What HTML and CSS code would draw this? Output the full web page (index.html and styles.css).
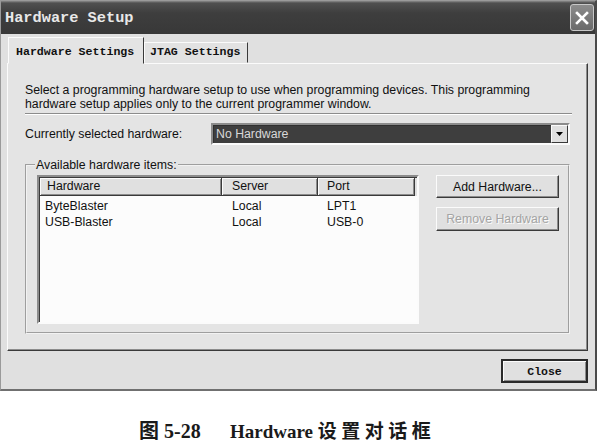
FILE: index.html
```html
<!DOCTYPE html>
<html>
<head>
<meta charset="utf-8">
<link rel="stylesheet" href="styles.css">
</head>
<body>
<div class="window">
  <div class="titlebar">
    <span class="title">Hardware Setup</span>
    <span class="xbtn"><svg width="14" height="14" viewBox="0 0 14 14"><path d="M2 2 L12 12 M12 2 L2 12" stroke="#fff" stroke-width="2.6" stroke-linecap="square"/></svg></span>
  </div>
  <div class="content">
    <div class="tabs">
      <div class="tab active">Hardware Settings</div>
      <div class="tab">JTAG Settings</div>
    </div>
    <div class="panel">
      <p class="desc">Select a programming hardware setup to use when programming devices. This programming<br>hardware setup applies only to the current programmer window.</p>
      <div class="sep"></div>
      <div class="selrow">
        <span class="sellabel">Currently selected hardware:</span>
        <div class="combo">
          <span class="combotext">No Hardware</span>
          <span class="arrow"><svg width="7" height="4" viewBox="0 0 7 4"><path d="M0 0 H7 L3.5 4 Z" fill="#000"/></svg></span>
        </div>
      </div>
      <fieldset class="group">
        <legend>Available hardware items:</legend>
        <div class="groupbody">
          <div class="list">
            <div class="lhead">
              <div class="hc c1">Hardware</div>
              <div class="hc c2">Server</div>
              <div class="hc c3">Port</div>
            </div>
            <div class="lrows">
              <div class="lrow"><span class="rc c1">ByteBlaster</span><span class="rc c2">Local</span><span class="rc c3">LPT1</span></div>
              <div class="lrow"><span class="rc c1">USB-Blaster</span><span class="rc c2">Local</span><span class="rc c3">USB-0</span></div>
            </div>
          </div>
          <div class="btns">
            <button class="btn">Add Hardware...</button>
            <button class="btn disabled">Remove Hardware</button>
          </div>
        </div>
      </fieldset>
    </div>
    <div class="footer">
      <button class="closebtn">Close</button>
    </div>
  </div>
</div>
<div class="caption"><span class="fig">图 5-28</span><span class="cap">Hardware <span class="cjk">设置对话框</span></span></div>
</body>
</html>
```
FILE: styles.css
```css
body {
  margin: 0;
  background: #fff;
  font-family: "Liberation Sans", Arial, sans-serif;
  width: 598px;
}
.window {
  width: 597px;
  height: 391px;
  box-sizing: border-box;
  background: #e0e0e0;
  border: 1px solid #9a9a9a;
  border-right: 2px solid #4a4a4a;
  border-bottom: 2px solid #707070;
  display: flex;
  flex-direction: column;
}
.titlebar {
  height: 33px;
  box-sizing: border-box;
  background: linear-gradient(#8a8a8a 0, #505050 2px, #3e3e3e 12px, #383838 100%);
  display: flex;
  align-items: center;
  justify-content: space-between;
  padding: 0 1px 0 4px;
}
.title {
  color: #e8e8e8;
  font-family: "Liberation Mono", "DejaVu Sans Mono", monospace;
  font-weight: bold;
  font-size: 15.3px;
}
.xbtn {
  width: 24px;
  height: 27px;
  box-sizing: border-box;
  border: 1px solid #c8c8c8;
  border-radius: 3px;
  background: linear-gradient(#8c8c8c, #6a6a6a);
  display: flex;
  align-items: center;
  justify-content: center;
}
.content {
  flex: 1;
  display: flex;
  flex-direction: column;
  padding: 3px 7px 0 6px;
}
.tabs {
  display: flex;
  align-items: flex-end;
  height: 26px;
  padding-left: 1px;
}
.tab {
  box-sizing: border-box;
  font-family: "Liberation Mono", "DejaVu Sans Mono", monospace;
  font-weight: bold;
  font-size: 11.6px;
  color: #111;
  border: 1px solid;
  border-color: #fbfbfb #3a3a3a transparent #fbfbfb;
  background: #e2e2e2;
  height: 21px;
  line-height: 18px;
  padding: 0 6px 0 5px;
  width: 104px;
}
.tab.active {
  width: 136px;
  height: 27px;
  line-height: 28px;
  padding-left: 7px;
  margin-bottom: -1px;
  position: relative;
  z-index: 1;
  background: #e4e4e4;
}
.panel {
  width: 581px;
  height: 288px;
  box-sizing: border-box;
  background: #e4e4e4;
  border: 1px solid;
  border-color: #fbfbfb #3a3a3a #3a3a3a #fbfbfb;
  box-shadow: inset -1px -1px 0 #8c8c8c;
  padding: 19px 15px 0 17px;
}
.desc {
  margin: 0;
  font-size: 12.3px;
  line-height: 14px;
  color: #111;
}
.sep {
  margin-top: 2px;
  border-top: 1px solid #8c8c8c;
  border-bottom: 1px solid #fff;
}
.selrow {
  margin-top: 8px;
  display: flex;
  align-items: center;
  height: 22px;
}
.sellabel {
  flex: 0 0 186px;
  font-size: 12.3px;
  color: #111;
}
.combo {
  width: 359px;
  height: 22px;
  box-sizing: border-box;
  border: 2px solid;
  border-color: #8c8c8c #fbfbfb #fbfbfb #8c8c8c;
  box-shadow: inset 1px 1px 0 #303030;
  background: #3e3e3e;
  display: flex;
  align-items: center;
  justify-content: space-between;
}
.combotext {
  color: #d8d8d8;
  font-size: 12.3px;
  padding-left: 3px;
}
.arrow {
  width: 17px;
  height: 18px;
  box-sizing: border-box;
  background: #e0e0e0;
  border: 1px solid;
  border-color: #fbfbfb #3a3a3a #3a3a3a #fbfbfb;
  display: flex;
  align-items: center;
  justify-content: center;
}
.group {
  margin: 13px 2px 0 0;
  padding: 3px 9px 8px 10px;
  border: 2px groove #f2f2f2;
  min-width: 0;
  box-sizing: border-box;
  width: 545px;
}
.group legend {
  font-size: 12.3px;
  line-height: 14px;
  color: #111;
  padding: 0 1px;
  margin-left: -2px;
}
.groupbody {
  display: flex;
  align-items: flex-start;
  gap: 17px;
}
.list {
  width: 383px;
  height: 149px;
  box-sizing: border-box;
  border: 2px solid;
  border-color: #8c8c8c #fbfbfb #fbfbfb #8c8c8c;
  box-shadow: inset 1px 1px 0 #3a3a3a;
  background: #fcfcfc;
  font-size: 12.3px;
  color: #111;
}
.lhead {
  display: flex;
  height: 18px;
  background: #e0e0e0;
  margin-left: 1px;
  margin-top: 1px;
}
.hc {
  box-sizing: border-box;
  height: 18px;
  line-height: 17px;
  border-right: 1px solid #3a3a3a;
  border-bottom: 1px solid #3a3a3a;
  box-shadow: inset 1px 1px 0 #fbfbfb, inset -1px -1px 0 #8c8c8c;
}
.hc.c1 { width: 182px; padding-left: 7px; }
.hc.c2 { width: 96px; padding-left: 10px; }
.hc.c3 { width: 97px; padding-left: 9px; }
.lrows {
  padding-top: 2px;
}
.lrow {
  display: flex;
  height: 16px;
  line-height: 16px;
}
.rc { box-sizing: border-box; }
.rc.c1 { width: 183px; padding-left: 6px; }
.rc.c2 { width: 96px; padding-left: 10px; }
.rc.c3 { width: 97px; padding-left: 9px; }
.btns {
  display: flex;
  flex-direction: column;
  gap: 9px;
}
.btn {
  width: 123px;
  height: 23px;
  box-sizing: border-box;
  background: #e0e0e0;
  border: 1px solid;
  border-color: #fbfbfb #3a3a3a #3a3a3a #fbfbfb;
  box-shadow: inset -1px -1px 0 #8c8c8c;
  font-family: "Liberation Sans", Arial, sans-serif;
  font-size: 12.3px;
  color: #111;
  padding: 0;
}
.btn.disabled {
  color: #a4a4a4;
  text-shadow: 1px 1px 0 #fbfbfb;
  height: 24px;
}
.footer {
  display: flex;
  justify-content: flex-end;
  margin-top: 8px;
}
.closebtn {
  width: 87px;
  height: 24px;
  box-sizing: border-box;
  background: #e0e0e0;
  border: 2px solid #2a2a2a;
  box-shadow: inset 1px 1px 0 #fbfbfb, inset -1px -1px 0 #8c8c8c;
  font-family: "Liberation Mono", "DejaVu Sans Mono", monospace;
  font-weight: bold;
  font-size: 11.5px;
  color: #111;
  padding: 0;
}
.caption {
  margin-top: 29px;
  padding-left: 139px;
  font-family: "Liberation Serif", "Noto Sans CJK SC", serif;
  font-weight: bold;
  font-size: 19px;
  line-height: 22px;
  color: #1a1a1a;
  display: flex;
  align-items: baseline;
}
.fig {
  font-size: 20px;
  width: 91px;
}
.cjk {
  display: inline-block;
  font-family: "Noto Sans CJK SC", sans-serif;
  font-size: 19px;
  line-height: 20px;
  letter-spacing: 4.5px;
}
```
